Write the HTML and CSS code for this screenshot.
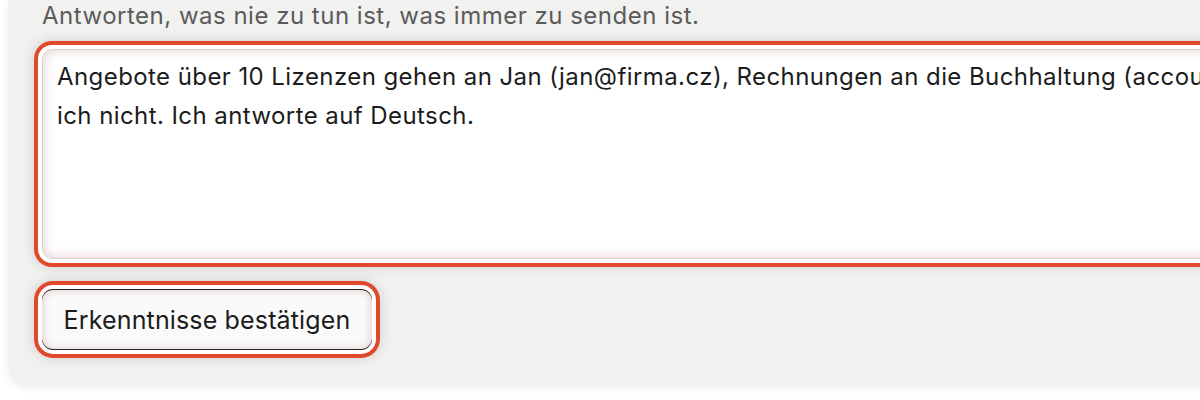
FILE: index.html
```html
<!DOCTYPE html>
<html lang="de">
<head>
<meta charset="utf-8">
<link rel="stylesheet" href="styles.css">
</head>
<body>
<div class="panel">
  <p class="hint">Antworten, was nie zu tun ist, was immer zu senden ist.</p>
  <textarea class="notes">Angebote über 10 Lizenzen gehen an Jan (jan@firma.cz), Rechnungen an die Buchhaltung (accounting@firma.cz). Rabatte über 15 % verspreche
ich nicht. Ich antworte auf Deutsch.</textarea>
  <div class="actions">
    <button class="confirm" type="button">Erkenntnisse bestätigen</button>
  </div>
</div>
</body>
</html>
```

FILE: styles.css
```css
html, body {
  margin: 0;
  padding: 0;
  background: #ffffff;
  overflow: hidden;
}

body {
  font-family: Inter, "Noto Sans", sans-serif;
  width: 1200px;
  height: 400px;
}

.panel {
  margin-left: 8px;
  width: 2100px;
  background: #f1f1ef;
  border-radius: 0 0 0 20px;
  padding: 0 0 35px 34px;
  box-shadow: 0 2px 10px rgba(0, 0, 0, 0.08);
  box-sizing: border-box;
}

.hint {
  margin: 0 0 17px 0;
  font-size: 24px;
  line-height: 32px;
  letter-spacing: 0.5px;
  color: #5b5b5b;
}

.notes {
  display: block;
  box-sizing: border-box;
  width: 2000px;
  height: 210px;
  margin: 0;
  padding: 7px 14px;
  border: 1px solid #d8d0ce;
  border-radius: 10px;
  background: #ffffff;
  font-family: Inter, "Noto Sans", sans-serif;
  font-size: 24px;
  line-height: 39px;
  letter-spacing: 0.42px;
  color: #1c1c1c;
  resize: none;
  outline: none;
  overflow: hidden;
  box-shadow:
    0 0 0 4px #ffffff,
    0 0 0 8px #e1492b,
    0 0 12px 9px rgba(0, 0, 0, 0.12),
    inset 0 0 12px rgba(150, 70, 60, 0.28);
}

.actions {
  display: flex;
  margin-top: 30px;
}

.confirm {
  box-sizing: border-box;
  width: 330px;
  height: 61px;
  padding: 0 10px;
  border: none;
  border-radius: 11px;
  background: #fbfafa;
  font-family: Inter, "Noto Sans", sans-serif;
  font-size: 25px;
  letter-spacing: 0.15px;
  color: #1c1c1c;
  cursor: pointer;
  box-shadow:
    inset 0 1px 0 #2a2222,
    inset 0 -1px 0 #2a2222,
    inset 0 0 10px rgba(150, 70, 60, 0.3),
    0 0 0 4px #ffffff,
    0 0 0 8px #e1492b,
    0 0 12px 9px rgba(0, 0, 0, 0.12);
}
```
